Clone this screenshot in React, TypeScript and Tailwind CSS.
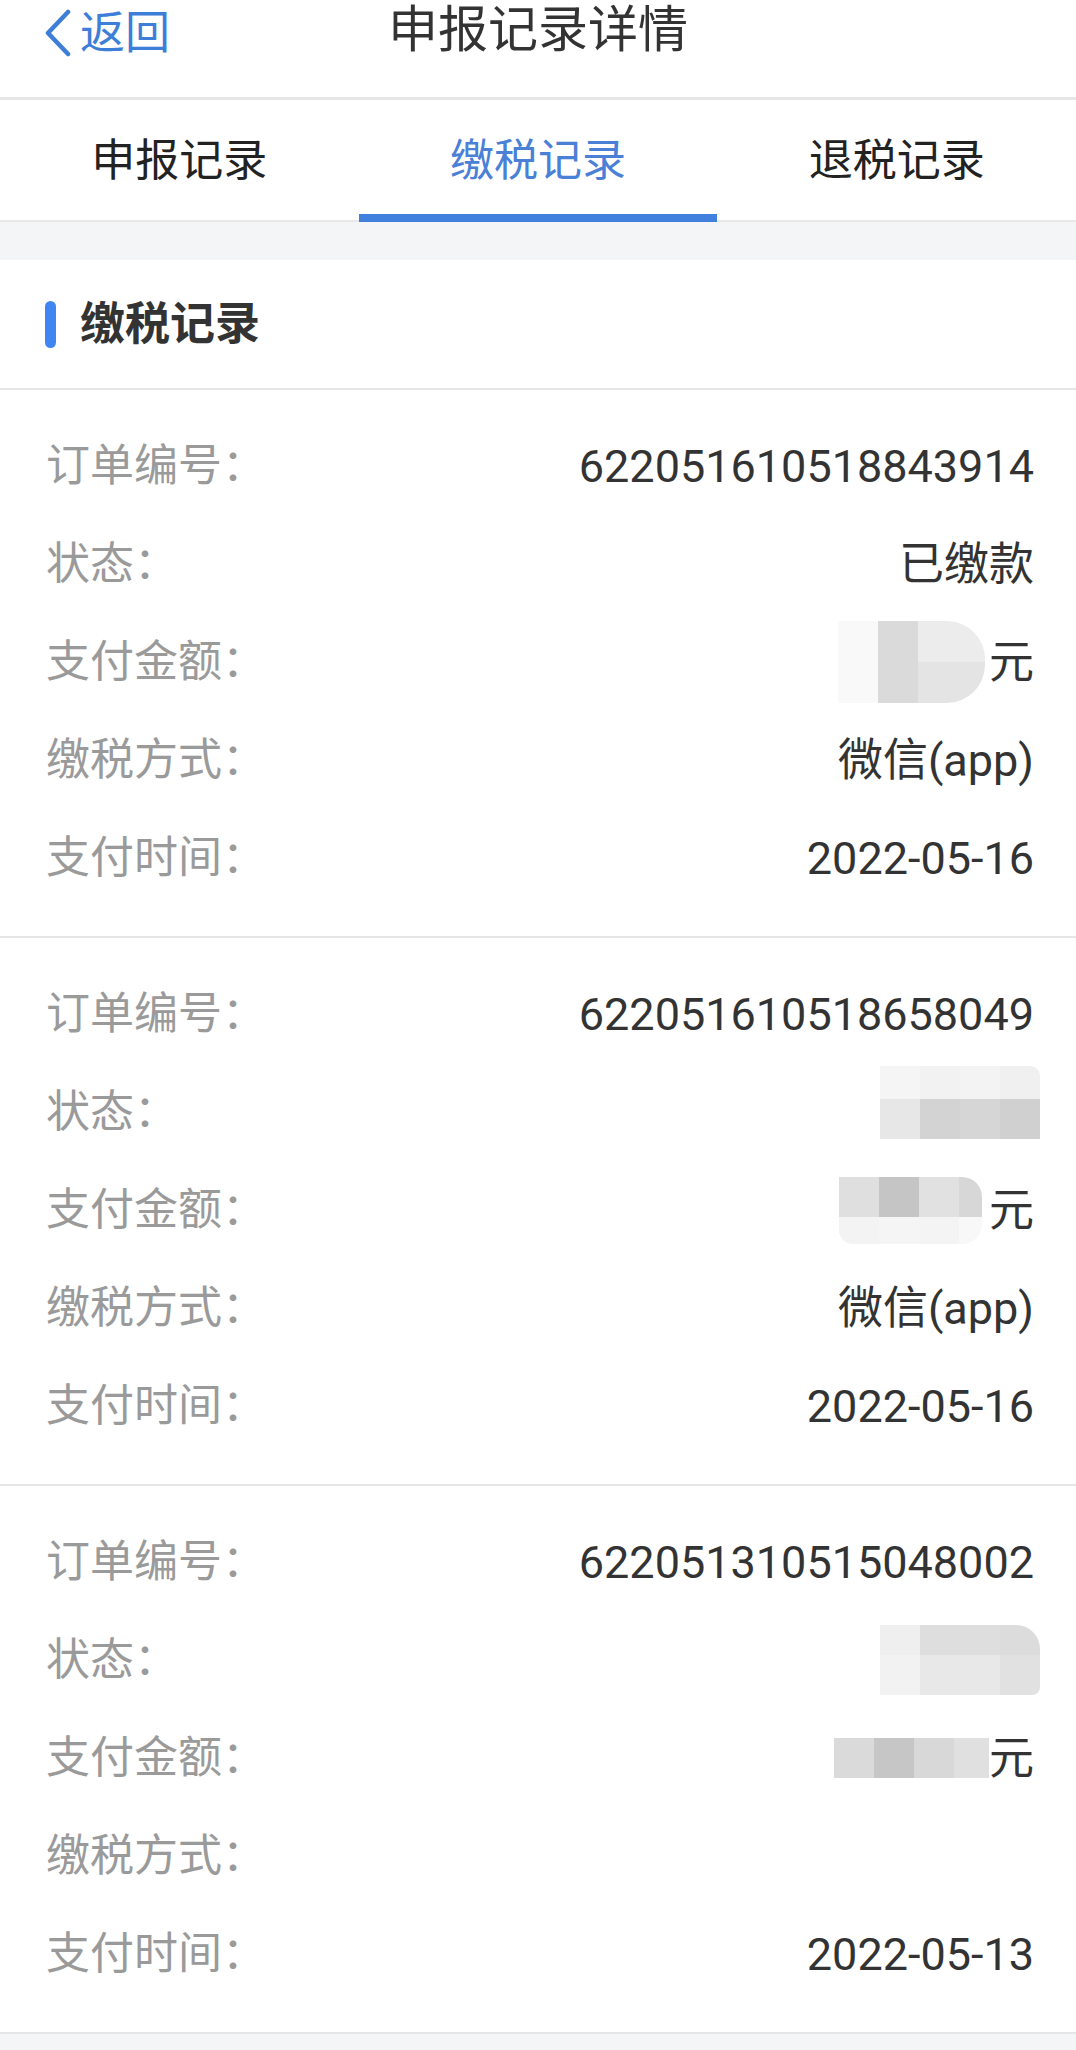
import React from "react";

type Row = { label: string; value: React.ReactNode };

function Card({ rows }: { rows: Row[] }) {
  return (
    <div className="border-b-2 border-[#e6e6e6] bg-white pb-[29px] pl-[46px] pr-[42px] pt-[27px]">
      {rows.map((r, i) => (
        <div key={i} className="flex h-[98px] items-center justify-between">
          <span className="text-[44px] leading-none text-[#9a9a9a]">{r.label}</span>
          <div className="flex items-center text-[45px] leading-none text-[#333333]">{r.value}</div>
        </div>
      ))}
    </div>
  );
}

function Amount1() {
  return (
    <div className="flex items-center">
      <div className="flex h-[82px]">
        <div className="w-[40px] bg-[#f9f9f9]" />
        <div className="w-[40px] bg-[#dadada]" />
        <div className="flex w-[67px] flex-col overflow-hidden rounded-r-[38px]">
          <div className="flex-1 bg-[#ececec]" />
          <div className="flex-1 bg-[#e4e4e4]" />
        </div>
      </div>
      <span className="ml-[4px]">元</span>
    </div>
  );
}

function Status2() {
  return (
    <div className="-mr-[6px] mb-[20px] grid h-[73px] w-[160px] grid-cols-4 grid-rows-[33px_40px] overflow-hidden rounded-tr-[10px]">
      <div className="bg-[#f5f5f5]" />
      <div className="bg-[#f2f2f2]" />
      <div className="bg-[#f3f3f3]" />
      <div className="bg-[#f0f0f0]" />
      <div className="bg-[#e7e7e7]" />
      <div className="bg-[#d3d3d3]" />
      <div className="bg-[#d6d6d6]" />
      <div className="bg-[#d0d0d0]" />
    </div>
  );
}

function Amount2() {
  return (
    <div className="flex items-center">
      <div className="grid h-[67px] grid-cols-[40px_40px_40px_23px] grid-rows-[40px_27px] overflow-hidden rounded-r-[20px] rounded-bl-[14px]">
        <div className="bg-[#dfdfdf]" />
        <div className="bg-[#c5c5c5]" />
        <div className="bg-[#e1e1e1]" />
        <div className="bg-[#d7d7d7]" />
        <div className="bg-[#f3f3f3]" />
        <div className="bg-[#f5f5f5]" />
        <div className="bg-[#f4f4f4]" />
        <div className="bg-[#f8f8f8]" />
      </div>
      <span className="ml-[7px]">元</span>
    </div>
  );
}

function Status3() {
  return (
    <div className="-mr-[6px] grid h-[70px] w-[160px] grid-cols-[40px_80px_40px] grid-rows-[30px_40px] overflow-hidden rounded-br-[8px] rounded-tr-[24px]">
      <div className="bg-[#efefef]" />
      <div className="bg-[#dedede]" />
      <div className="bg-[#dcdcdc]" />
      <div className="bg-[#f2f2f2]" />
      <div className="bg-[#e8e8e8]" />
      <div className="bg-[#e1e1e1]" />
    </div>
  );
}

function Amount3() {
  return (
    <div className="flex items-center">
      <div className="grid h-[40px] grid-cols-[40px_40px_40px_35px]">
        <div className="bg-[#dadada]" />
        <div className="bg-[#c6c6c6]" />
        <div className="bg-[#d8d8d8]" />
        <div className="bg-[#e0e0e0]" />
      </div>
      <span>元</span>
    </div>
  );
}

export default function App() {
  const cards: Row[][] = [
    [
      { label: "订单编号：", value: "622051610518843914" },
      { label: "状态：", value: "已缴款" },
      { label: "支付金额：", value: <Amount1 /> },
      { label: "缴税方式：", value: "微信(app)" },
      { label: "支付时间：", value: "2022-05-16" },
    ],
    [
      { label: "订单编号：", value: "622051610518658049" },
      { label: "状态：", value: <Status2 /> },
      { label: "支付金额：", value: <Amount2 /> },
      { label: "缴税方式：", value: "微信(app)" },
      { label: "支付时间：", value: "2022-05-16" },
    ],
    [
      { label: "订单编号：", value: "622051310515048002" },
      { label: "状态：", value: <Status3 /> },
      { label: "支付金额：", value: <Amount3 /> },
      { label: "缴税方式：", value: "" },
      { label: "支付时间：", value: "2022-05-13" },
    ],
  ];

  const tabs = ["申报记录", "缴税记录", "退税记录"];

  return (
    <div className="min-h-[2050px] w-full bg-[#f4f5f7] font-['Roboto','Noto_Sans_CJK_SC',sans-serif]">
      {/* Header */}
      <header className="grid h-[100px] grid-cols-[1fr_auto_1fr] items-start border-b-[3px] border-[#e6e6e6] bg-white">
        <div className="mt-[3px] flex h-[60px] items-center pl-[44px] text-[#3d7ed8]">
          <svg width="28" height="48" viewBox="0 0 28 48" className="mr-[8px]">
            <polyline
              points="24,3 4,24 24,45"
              fill="none"
              stroke="currentColor"
              strokeWidth="4.5"
              strokeLinecap="round"
              strokeLinejoin="round"
            />
          </svg>
          <span className="text-[45px] leading-none">返回</span>
        </div>
        <h1 className="flex h-[60px] items-center text-[50px] font-normal leading-none text-[#333333]">
          申报记录详情
        </h1>
        <div />
      </header>

      {/* Tabs */}
      <nav className="grid h-[122px] grid-cols-3 bg-white shadow-[inset_0_-2px_0_#e8e8e8]">
        {tabs.map((t, i) => (
          <div key={t} className="relative flex items-center justify-center">
            <span
              className={
                i === 1
                  ? "text-[44px] leading-none text-[#4a80d6]"
                  : "text-[44px] leading-none text-[#222222]"
              }
            >
              {t}
            </span>
            {i === 1 && <div className="absolute bottom-0 left-0 h-[8px] w-full bg-[#4081e0]" />}
          </div>
        ))}
      </nav>

      {/* Section header */}
      <section className="mt-[38px] flex h-[130px] items-center border-b-2 border-[#e6e6e6] bg-white pl-[45px]">
        <div className="h-[47px] w-[11px] rounded-full bg-[#3f86f2]" />
        <span className="ml-[24px] text-[45px] font-bold leading-none text-[#333333]">缴税记录</span>
      </section>

      {cards.map((rows, i) => (
        <Card key={i} rows={rows} />
      ))}
    </div>
  );
}
